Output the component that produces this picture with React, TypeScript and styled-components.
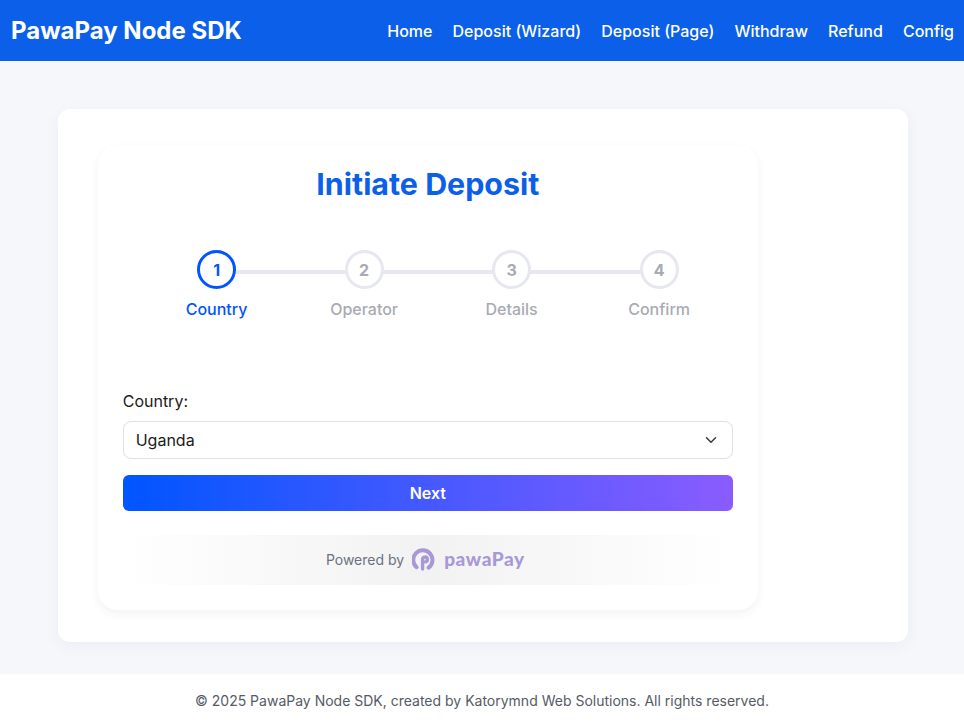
import { useState } from "react";
import styled, { createGlobalStyle } from "styled-components";
import { ChevronDown } from "lucide-react";

const GlobalStyle = createGlobalStyle`
  html, body {
    margin: 0;
    padding: 0;
    background: #f5f7fb;
    font-family: "Inter", "Liberation Sans", sans-serif;
    color: #1a1a1a;
  }
  * {
    box-sizing: border-box;
  }
`;

const Page = styled.div`
  min-height: 727px;
  display: flex;
  flex-direction: column;
`;
const Header = styled.header`
  height: 61px;
  background-color: #0b5fe8;
  display: flex;
  align-items: center;
  justify-content: space-between;
  padding: 0 10px 0 11px;
`;
const Brand = styled.div`
  color: white;
  font-size: 24px;
  font-weight: 700;
`;
const Nav = styled.nav`
  display: flex;
  gap: 20.1px;
`;
const NavLink = styled.a`
  color: white;
  font-size: 16px;
  font-weight: 500;
  text-decoration: none;
`;
const Main = styled.main`
  flex-grow: 1;
  padding: 48px 56px 32px 58px;
`;
const OuterCard = styled.div`
  background-color: white;
  border-radius: 12px;
  box-shadow: 0 4px 16px rgba(40, 50, 90, 0.05);
  height: 533px;
  padding: 36px 150px 32px 40px;
`;
const FormCard = styled.div`
  background-color: white;
  border-radius: 20px;
  box-shadow: 0 4px 10px rgba(40, 50, 90, 0.06);
  height: 465px;
  padding: 20px 25px 25px 24.7px;
  display: flex;
  flex-direction: column;
`;
const Title = styled.h2`
  margin: 0;
  text-align: center;
  color: #0b5fe8;
  font-size: 30.4px;
  font-weight: 700;
  line-height: 38px;
`;
const Stepper = styled.div`
  display: flex;
  justify-content: center;
  margin-top: 47px;
  padding-left: 20px;
  height: 141px;
`;
const Step = styled.div<{ $last?: boolean }>`
  position: relative;
  width: 147.5px;
  display: flex;
  flex-direction: column;
  align-items: center;
  gap: 10px;
  &::after {
    content: "";
    display: ${(p) => (p.$last ? "none" : "block")};
    position: absolute;
    top: 20px;
    left: 50%;
    width: 100%;
    height: 4px;
    background-color: #e6e7ef;
  }
`;
const Circle = styled.div<{ $active?: boolean }>`
  position: relative;
  z-index: 1;
  width: 39px;
  height: 39px;
  border-radius: 50%;
  background-color: white;
  border: ${(p) => (p.$active ? "3.5px solid #0055ff" : "3px solid #e6e7ef")};
  color: ${(p) => (p.$active ? "#0055ff" : "#a8abb3")};
  font-size: 16px;
  font-weight: 700;
  display: flex;
  align-items: center;
  justify-content: center;
`;
const StepLabel = styled.div<{ $active?: boolean }>`
  font-size: 16px;
  font-weight: 500;
  line-height: 20px;
  color: ${(p) => (p.$active ? "#0055ff" : "#a8abb3")};
`;
const Label = styled.label`
  font-size: 16px;
  font-weight: 400;
  line-height: 20px;
  margin-bottom: 10px;
`;
const SelectBox = styled.div`
  height: 38px;
  border: 1px solid #dfe1e8;
  border-radius: 8px;
  display: flex;
  align-items: center;
  justify-content: space-between;
  padding: 0 12px;
  font-size: 16px;
  margin-bottom: 16px;
`;
const NextButton = styled.button`
  height: 36px;
  border: none;
  border-radius: 6px;
  background: linear-gradient(90deg, #0055ff 0%, #8a5cff 100%);
  color: white;
  font-family: inherit;
  font-size: 16px;
  font-weight: 600;
`;
const PoweredBy = styled.div`
  height: 50px;
  margin-top: 24px;
  padding: 0 5px 2px 0;
  background: linear-gradient(90deg, #ffffff 0%, #f2f2f3 50%, #ffffff 100%);
  display: flex;
  align-items: center;
  justify-content: center;
  gap: 8px;
  font-size: 14px;
  color: #6b7280;
`;
const LogoText = styled.span`
  color: #a899d6;
  font-family: "Lato", "Inter", sans-serif;
  font-size: 19px;
  font-weight: 900;
  letter-spacing: 0.6px;
  margin-bottom: 2px;
`;
const Footer = styled.footer`
  height: 53px;
  background-color: white;
  display: flex;
  align-items: center;
  justify-content: center;
  font-size: 14px;
  color: #555b66;
`;

const links = ["Home", "Deposit (Wizard)", "Deposit (Page)", "Withdraw", "Refund", "Config"];
const steps = ["Country", "Operator", "Details", "Confirm"];

function PawaMark() {
  return (
    <svg width="24" height="24" viewBox="0 0 24 24" fill="none">
      <path
        d="M4.6 20.2A9.6 9.6 0 1 1 16.6 20.6"
        stroke="#a899d6"
        strokeWidth="4"
        strokeLinecap="round"
      />
      <path
        d="M10.6 22V12.4a2.4 2.4 0 1 1 3 2.4"
        stroke="#a899d6"
        strokeWidth="3.4"
        strokeLinecap="round"
      />
    </svg>
  );
}

export default function App() {
  const [current] = useState(0);
  return (
    <Page>
      <GlobalStyle />
      <Header>
        <Brand>PawaPay Node SDK</Brand>
        <Nav>
          {links.map((l) => (
            <NavLink key={l}>{l}</NavLink>
          ))}
        </Nav>
      </Header>
      <Main>
        <OuterCard>
          <FormCard>
            <Title>Initiate Deposit</Title>
            <Stepper>
              {steps.map((s, i) => (
                <Step key={s} $last={i === steps.length - 1}>
                  <Circle $active={i === current}>{i + 1}</Circle>
                  <StepLabel $active={i === current}>{s}</StepLabel>
                </Step>
              ))}
            </Stepper>
            <Label>Country:</Label>
            <SelectBox>
              Uganda
              <ChevronDown size={18} color="#343a40" />
            </SelectBox>
            <NextButton>Next</NextButton>
            <PoweredBy>
              Powered by
              <PawaMark />
              <LogoText>pawaPay</LogoText>
            </PoweredBy>
          </FormCard>
        </OuterCard>
      </Main>
      <Footer>© 2025 PawaPay Node SDK, created by Katorymnd Web Solutions. All rights reserved.</Footer>
    </Page>
  );
}
